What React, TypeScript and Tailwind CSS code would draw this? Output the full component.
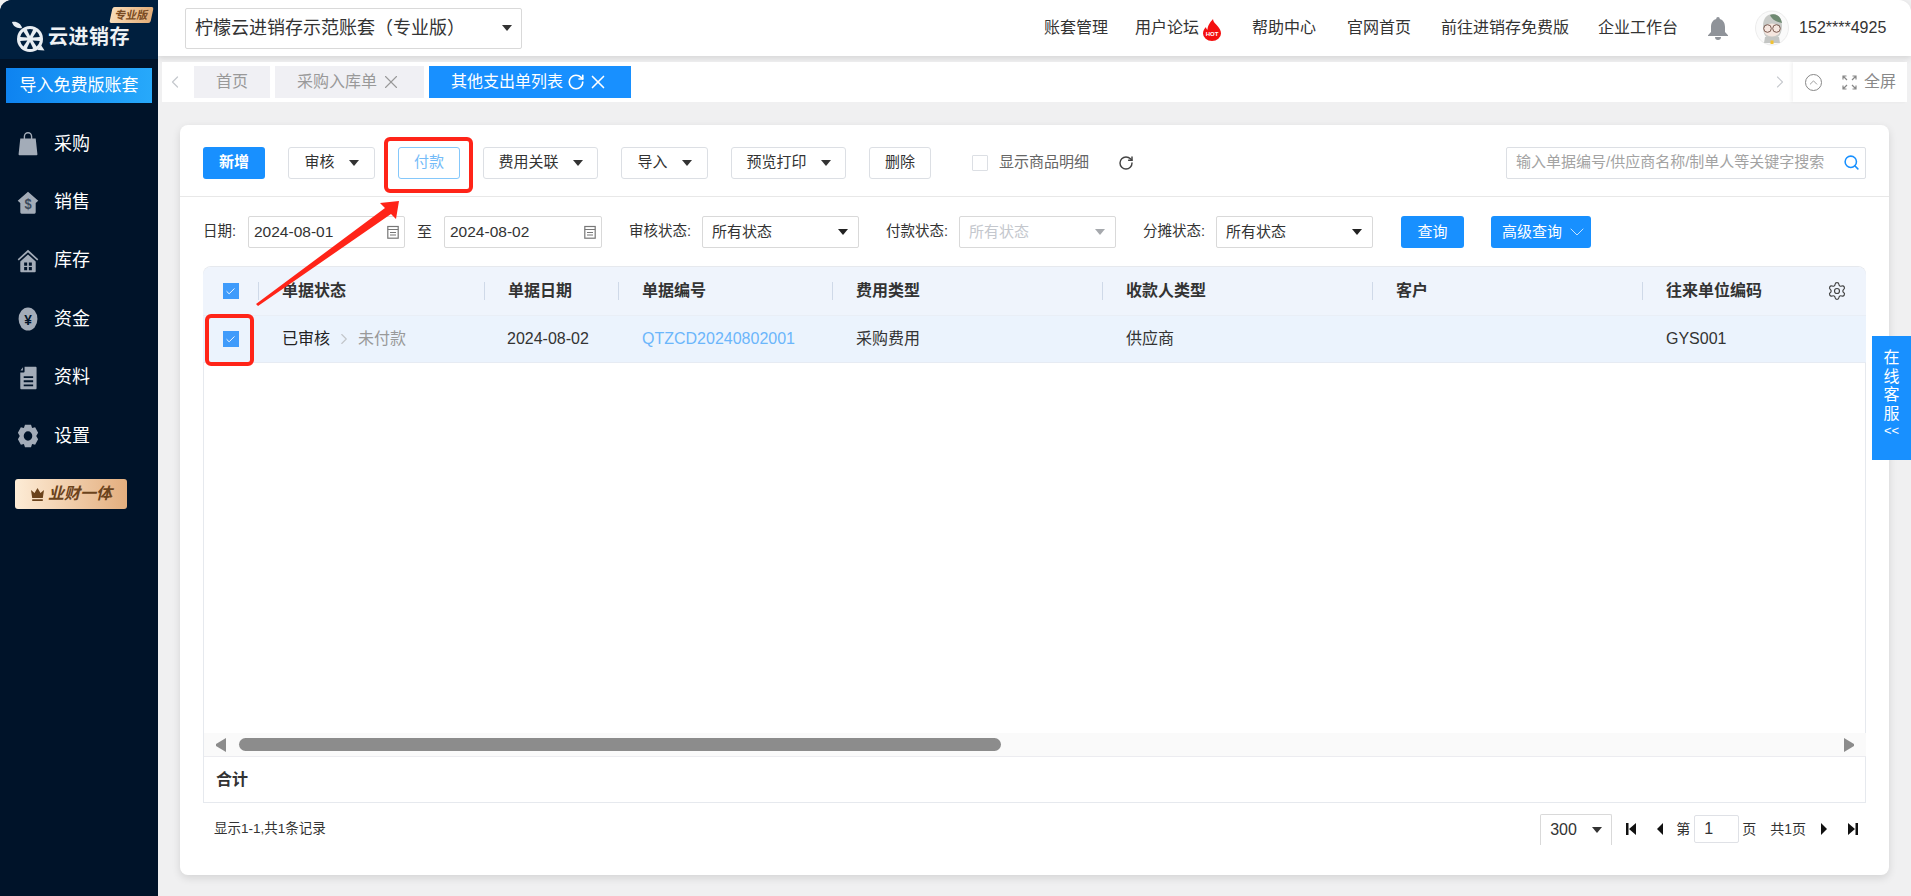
import React from "react";
import { ChevronLeft, ChevronRight, ChevronDown, ChevronUp, RotateCw, X, Search, Settings, Check } from "lucide-react";

const Caret = ({ color = "#333" }: { color?: string }) => (
  <svg width="10" height="6" viewBox="0 0 10 6" className="shrink-0"><path d="M0 0h10L5 6z" fill={color} /></svg>
);

const icons: Record<string, React.ReactNode> = {
  bag: <path d="M9 8V6a5 5 0 0 1 10 0v2h-1.600V6a3.400 3.400 0 0 0-6.800 0v2zM5 8h18l2 17a1 1 0 0 1-1 1H4a1 1 0 0 1-1-1z" />,
  sale: (
    <>
      <path d="M14 2l12 9.500-3 2.500v10a1.500 1.500 0 0 1-1.500 1.500h-15A1.500 1.500 0 0 1 5 24V14l-3-2.500z" />
      <text x="14" y="21" textAnchor="middle" fontSize="15" fontWeight="700" fill="#3c4a5c">$</text>
    </>
  ),
  home: <path fillRule="evenodd" d="M14 2L26 12l-1.200 1.500L14 4.600 3.200 13.500 2 12zM5 14.500l9-7.400 9 7.400V25a1 1 0 0 1-1 1H6a1 1 0 0 1-1-1zM9.500 15.500v3.500h3.500v-3.500zm5.500 0v3.500h3.500v-3.500zm-5.500 5v3.500h3.500v-3.500zm5.500 0v3.500h3.500v-3.500z" />,
  coin: (
    <>
      <ellipse cx="14" cy="14" rx="11" ry="12.500" />
      <text x="14" y="20" textAnchor="middle" fontSize="16" fontWeight="700" fill="#001329">¥</text>
    </>
  ),
  doc: <path fillRule="evenodd" d="M10 2h13a1 1 0 0 1 1 1v22a1 1 0 0 1-1 1H6a1 1 0 0 1-1-1V8h4a1 1 0 0 0 1-1zM8 2.500V6H5.300zM9 12v2h11v-2zm0 4.500v2h11v-2zm0 4.500v2h11v-2z" />,
  gear: <path fillRule="evenodd" d="M10.500 2h7l1.300 3.300 3.500-.600 3.500 5.800-2.200 3.500 2.200 3.500-3.500 5.800-3.500-.600L17.500 26h-7l-1.300-3.300-3.500.600-3.500-5.800 2.200-3.500-2.200-3.500 3.500-5.800 3.500.600zM14 9a5 5 0 1 0 0 10 5 5 0 0 0 0-10z" />,
};

const NavItem = ({ icon, label }: { icon: string; label: string }) => (
  <div className="flex h-[58.4px] items-center pl-[16px] text-[18px] text-white">
    <svg width="24" height="26" viewBox="0 0 28 28" fill="#a3acb8" className="shrink-0" preserveAspectRatio="none">{icons[icon]}</svg>
    <span className="ml-[14px]">{label}</span>
  </div>
);

const Lemon = () => (
  <svg width="37" height="32" viewBox="0 0 37 32" className="shrink-0">
    <path d="M1 1c4.500-1 9 1.500 10 6-4.500 1-9-1.500-10-6z" fill="#e8edf2" />
    <circle cx="19" cy="18" r="13" fill="#e8edf2" />
    <path d="M30 24l3.500 5.500-7-.500z" fill="#e8edf2" />
    <g fill="#001f3e">
      {[0, 60, 120, 180, 240, 300].map((a) => (
        <path key={a} transform={`rotate(${a} 19 18)`} d="M19 15L15.800 8.500A10 10 0 0 1 22.200 8.500z" />
      ))}
    </g>
  </svg>
);

const Sidebar = () => (
  <aside className="flex h-full w-[158px] shrink-0 flex-col overflow-hidden rounded-tl-xl bg-[#001329]">
    <div className="relative flex h-[59px] items-center bg-[#001f3e] pl-[11px] pt-[14px]">
      <Lemon />
      <span className="text-[20px] leading-none font-bold tracking-[0.5px] text-[#eef1f4]">云进销存</span>
      <span className="absolute top-[7px] left-[111px] flex h-[16px] w-[41px] -skew-x-12 items-center justify-center rounded-[2px] bg-gradient-to-r from-[#f8dcb8] to-[#e3ad78] text-[11px] font-bold text-[#7a4b22]">专业版</span>
    </div>
    <div className="mx-[6px] mt-[9px] flex h-[35px] items-center justify-center bg-gradient-to-r from-[#0e83f0] to-[#27a9fb] text-[17px] text-white">导入免费版账套</div>
    <nav className="mt-[12px]">
      <NavItem icon="bag" label="采购" />
      <NavItem icon="sale" label="销售" />
      <NavItem icon="home" label="库存" />
      <NavItem icon="coin" label="资金" />
      <NavItem icon="doc" label="资料" />
      <NavItem icon="gear" label="设置" />
    </nav>
    <div className="ml-[15px] mt-[14px] flex h-[30px] w-[112px] items-center justify-center gap-[3px] rounded-[3px] bg-gradient-to-r from-[#fdecd6] to-[#e3ae7e] text-[16px] font-bold text-[#6b431c] italic">
      <svg width="15" height="15" viewBox="0 0 15 15" fill="#6b431c"><path d="M1 3l3.500 3L7.500 1l3 5L14 3l-1.200 8H2.200zM2.200 12.300h10.600V14H2.200z" /></svg>
      <span>业财一体</span>
    </div>
  </aside>
);

const Flame = () => (
  <svg width="18" height="22" viewBox="0 0 18 22" className="mt-[3px] ml-[4px]">
    <path d="M10 0c0 3 2.500 4.500 4.500 7 2 2.500 3.500 4.500 3.500 7.500a9 7.500 0 0 1-18 0c0-3 1.500-5 3-6.500 0 1.200.5 2.200 1.500 2.700C4.500 6.500 7.500 3 10 0z" fill="#f40f0f" />
    <text x="9" y="16.500" textAnchor="middle" fontSize="6" fontWeight="700" fill="#fff">HOT</text>
  </svg>
);

const TopBar = () => (
  <header className="flex h-[56px] shrink-0 items-center rounded-tr-xl bg-white pl-[27px] text-[16px] text-[#333] shadow-[0_2px_6px_rgba(0,0,0,0.12)]">
    <div className="flex h-[41px] w-[337px] items-center justify-between rounded-[2px] border border-[#d9d9d9] pr-[9px] pl-[9px] text-[18px]">
      <span>柠檬云进销存示范账套（专业版）</span>
      <Caret />
    </div>
    <div className="ml-[522px] flex items-center">账套管理</div>
    <div className="ml-[27px] flex items-center">用户论坛<Flame /></div>
    <div className="ml-[31px]">帮助中心</div>
    <div className="ml-[31px]">官网首页</div>
    <div className="ml-[30px]">前往进销存免费版</div>
    <div className="ml-[29px]">企业工作台</div>
    <svg width="20" height="23" viewBox="0 0 20 23" fill="#8f9399" className="ml-[30px]">
      <path d="M10 0a1.800 1.800 0 0 1 1.800 1.900C15.300 2.800 17 6 17 10v5l3 3.200V19H0v-.8L3 15v-5c0-4 1.700-7.200 5.200-8.100A1.800 1.800 0 0 1 10 0zM7 20h6a3 3 0 0 1-6 0z" />
    </svg>
    <svg width="34" height="36" viewBox="0 0 34 36" className="ml-[27px]">
      <ellipse cx="17" cy="18" rx="16.500" ry="17" fill="#fafafa" stroke="#ececec" />
      <path d="M8 16C8 8 12 4 18 4c5 0 9 4 9 12 0 7-3 13-10 13S8 23 8 16z" fill="#c9cbc8" />
      <path d="M15 5c5-2.500 11 1 12 8-5-1-10-3-12-8z" fill="#6f8a72" />
      <ellipse cx="17" cy="20" rx="8.500" ry="6.500" fill="#f5e6df" />
      <circle cx="12.500" cy="18.500" r="3.800" fill="none" stroke="#7a5a50" />
      <circle cx="21.500" cy="18.500" r="3.800" fill="none" stroke="#7a5a50" />
      <path d="M10 27h14l1 6H9z" fill="#c4c6c4" />
      <path d="M15.500 30.500h3v3.500h-3z" fill="#f2c230" />
    </svg>
    <span className="ml-[10px]">152****4925</span>
  </header>
);

const TabBar = () => (
  <div className="mt-[6px] mr-[4px] ml-[4px] flex h-[40px] shrink-0 items-center bg-white text-[16px]">
    <ChevronLeft className="ml-[3px] text-[#c6c9ce]" size={20} strokeWidth={1.500} />
    <div className="ml-[9px] flex h-[32px] w-[76px] items-center justify-center bg-[#f0f0f4] text-[#999]">首页</div>
    <div className="ml-[5px] flex h-[32px] w-[149px] items-center justify-center gap-[3px] bg-[#f0f0f4] text-[#999]">采购入库单<X size={22} strokeWidth={1.200} /></div>
    <div className="ml-[5px] flex h-[32px] w-[202px] items-center gap-[4px] bg-[#1890ff] pl-[22px] text-white">其他支出单列表<RotateCw size={18} strokeWidth={2.200} /><X size={22} strokeWidth={1.800} className="ml-[-2px]" /></div>
    <ChevronRight className="ml-auto text-[#c6c9ce]" size={20} strokeWidth={1.300} />
    <div className="ml-[3px] flex h-full w-[114px] items-center pl-[12px] text-[#888] shadow-[-2px_0_3px_rgba(0,0,0,0.05)]">
      <span className="flex h-[17px] w-[17px] shrink-0 items-center justify-center rounded-full border border-[#888]"><ChevronUp size={13} strokeWidth={1.500} /></span>
      <svg width="15" height="15" viewBox="0 0 15 15" fill="none" stroke="#888" strokeWidth="1.200" className="ml-[20px] shrink-0">
        <path d="M1 4.500V1h3.500M1 1l4 4M14 4.500V1h-3.500M14 1l-4 4M1 10.500V14h3.500M1 14l4-4M14 10.500V14h-3.500M14 14l-4-4" />
      </svg>
      <span className="ml-[7px]">全屏</span>
    </div>
  </div>
);

const Btn = ({ w, label, caret, light }: { w: string; label: string; caret?: boolean; light?: boolean }) => (
  <div className={`${w} flex h-[32px] shrink-0 items-center justify-center gap-[14px] rounded-[3px] border text-[15px] ${light ? "border-[#85c8fb] text-[#74bbf8]" : "border-[#dcdfe4] text-[#333]"}`}>
    <span>{label}</span>
    {caret && <Caret />}
  </div>
);

const Toolbar = () => (
  <div className="flex h-[72px] shrink-0 items-center gap-[23px] border-b border-[#e8e8e8] px-[23px] pt-[4px]">
    <div className="flex h-[32px] w-[62px] items-center justify-center rounded-[3px] bg-[#1890ff] text-[15px] font-semibold text-white">新增</div>
    <Btn w="w-[87px]" label="审核" caret />
    <Btn w="w-[62px]" label="付款" light />
    <Btn w="w-[115px]" label="费用关联" caret />
    <Btn w="w-[87px]" label="导入" caret />
    <Btn w="w-[115px]" label="预览打印" caret />
    <Btn w="w-[62px]" label="删除" />
    <span className="ml-[18px] h-[16px] w-[16px] rounded-[1px] border border-[#dcdfe4]" />
    <span className="-ml-[12px] text-[15px] text-[#666]">显示商品明细</span>
    <RotateCw className="ml-[6px] text-[#444]" size={16} strokeWidth={2.200} />
    <div className="ml-auto flex h-[32px] w-[360px] items-center justify-between rounded-[2px] border border-[#dcdfe4] pr-[5px] pl-[9px] text-[15px] text-[#a3a3a3]">
      <span>输入单据编号/供应商名称/制单人等关键字搜索</span>
      <Search size={17} color="#1890ff" strokeWidth={2.200} />
    </div>
  </div>
);

const Cal = () => (
  <svg width="12" height="14" viewBox="0 0 12 14" fill="none" stroke="#777" strokeWidth="1.200" className="shrink-0">
    <rect x="0.800" y="1.500" width="10.400" height="11.700" /><path d="M0.800 4.500h10.400M3 7.500h6M3 10h6" />
  </svg>
);

const DateBox = ({ w, v }: { w: string; v: string }) => (
  <div className={`${w} flex h-[32px] shrink-0 items-center justify-between rounded-[2px] border border-[#d9d9d9] pr-[5px] pl-[5px] text-[15.500px] text-[#333]`}>
    <span>{v}</span><Cal />
  </div>
);

const SelBox = ({ disabled }: { disabled?: boolean }) => (
  <div className={`flex h-[32px] w-[157px] shrink-0 items-center justify-between rounded-[2px] border border-[#d9d9d9] pr-[10px] pl-[9px] text-[15px] ${disabled ? "text-[#c4c7cd]" : "text-[#333]"}`}>
    <span>所有状态</span><Caret color={disabled ? "#a6a9ad" : "#222"} />
  </div>
);

const Lbl = ({ w, t, cls = "" }: { w: string; t: string; cls?: string }) => (
  <span className={`${w} ${cls} shrink-0 text-[14.500px] text-[#333]`}>{t}</span>
);

const FilterRow = () => (
  <div className="mt-[19px] flex h-[32px] shrink-0 items-center px-[23px]">
    <Lbl w="w-[45px]" t="日期:" />
    <DateBox w="w-[157px]" v="2024-08-01" />
    <span className="w-[39px] shrink-0 text-center text-[15px] text-[#333]">至</span>
    <DateBox w="w-[158px]" v="2024-08-02" />
    <Lbl w="w-[73px]" cls="ml-[27px]" t="审核状态:" />
    <SelBox />
    <Lbl w="w-[73px]" cls="ml-[27px]" t="付款状态:" />
    <SelBox disabled />
    <Lbl w="w-[73px]" cls="ml-[27px]" t="分摊状态:" />
    <SelBox />
    <div className="ml-[28px] flex h-[32px] w-[63px] items-center justify-center rounded-[3px] bg-[#1890ff] text-[15px] text-white">查询</div>
    <div className="ml-[27px] flex h-[32px] w-[100px] items-center gap-[3px] rounded-[3px] bg-[#1890ff] pl-[11px] text-[15px] text-white">高级查询<ChevronDown size={24} strokeWidth={1} color="#c5e3ff" /></div>
  </div>
);

const cols = "grid grid-cols-[55px_226px_134px_214px_270px_270px_270px_1fr]";

const CheckBox = () => (
  <span className="flex h-[16px] w-[16px] items-center justify-center bg-[#3f9bfb]"><Check size={11} color="#fff" strokeWidth={2} /></span>
);

const HeadCell = ({ t }: { t: string }) => (
  <div className="flex items-center">
    <span className="mr-[23px] h-[18px] w-px bg-[#cfd9e8]" />
    <span>{t}</span>
  </div>
);

const Table = () => (
  <div className="mx-[23px] mt-[18px] flex min-h-0 flex-1 flex-col rounded-t-lg border-x border-t border-[#e6e9ee] text-[16px]">
    <div className={`${cols} relative -mx-px h-[49px] shrink-0 items-center rounded-t-lg border-b border-[#e9eef6] bg-[#eff4fc] font-semibold text-[#333]`}>
      <div className="flex justify-center"><CheckBox /></div>
      <HeadCell t="单据状态" /><HeadCell t="单据日期" /><HeadCell t="单据编号" /><HeadCell t="费用类型" /><HeadCell t="收款人类型" /><HeadCell t="客户" /><HeadCell t="往来单位编码" />
      <Settings className="absolute top-[14px] right-[19px] text-[#444]" size={20} strokeWidth={1.400} />
    </div>
    <div className={`${cols} -mx-px h-[47px] shrink-0 items-center border-b border-[#e6ebf3] bg-[#ebf3fd] text-[#333]`}>
      <div className="flex justify-center"><CheckBox /></div>
      <div className="flex items-center pl-[24px]"><span className="text-[#222]">已审核</span><ChevronRight className="mx-[5px] text-[#c2c5ca]" size={18} strokeWidth={1.500} /><span className="text-[#999]">未付款</span></div>
      <div className="pl-[23px]">2024-08-02</div>
      <div className="pl-[24px] text-[#6bb6fb]">QTZCD20240802001</div>
      <div className="pl-[24px]">采购费用</div>
      <div className="pl-[24px]">供应商</div>
      <div />
      <div className="pl-[24px]">GYS001</div>
    </div>
    <div className="min-h-0 flex-1" />
    <div className="-mr-px flex h-[24px] shrink-0 items-center border-b border-[#ececf0] bg-[#fafafa] pr-[11px] pl-[11px]">
      <svg width="12" height="14" viewBox="0 0 12 14" fill="#8c8c8c"><path d="M11 0v14L1 8V6z" /></svg>
      <div className="ml-[12px] h-[13px] w-[762px] rounded-full bg-[#8c8c8c]" />
      <svg width="12" height="14" viewBox="0 0 12 14" fill="#8c8c8c" className="ml-auto"><path d="M1 0v14l10-6V6z" /></svg>
    </div>
    <div className="flex h-[46px] shrink-0 items-center border-b border-[#e6e9ee] pl-[12px] font-semibold text-[#333]">合计</div>
  </div>
);

const PgIcon = ({ d, cls }: { d: string; cls: string }) => (
  <svg width="10" height="12" viewBox="0 0 10 12" fill="#111" className={cls}><path d={d} /></svg>
);

const Pager = () => (
  <div className="flex h-[72px] shrink-0 items-start pt-[11px] pr-[31px] pl-[23px] text-[#333]">
    <span className="mt-[5px] ml-[11px] text-[13.500px]">显示1-1,共1条记录</span>
    <div className="ml-auto flex h-[31px] w-[72px] items-center justify-between rounded-t-[2px] border-x border-t border-[#d9d9d9] pr-[9px] pl-[9px] text-[16px]">
      <span>300</span><Caret />
    </div>
    <div className="flex h-[30px] items-center text-[14px]">
      <PgIcon cls="ml-[14px]" d="M0 0h2.500v12H0zM10 0v12L3 6z" />
      <PgIcon cls="ml-[19px]" d="M8 0v12L2 6z" />
      <span className="ml-[11px]">第</span>
      <span className="ml-[4px] flex h-[28px] w-[45px] items-center rounded-[2px] border border-[#dfe1e6] pl-[9px] text-[16px]">1</span>
      <span className="ml-[3px]">页</span>
      <span className="ml-[14px]">共1页</span>
      <PgIcon cls="ml-[13px]" d="M2 0v12l6-6z" />
      <PgIcon cls="ml-[19px]" d="M7.500 0H10v12H7.500zM0 0v12l7-6z" />
    </div>
  </div>
);

const Overlays = () => (
  <>
    <div className="absolute top-[137px] left-[384px] h-[56px] w-[89px] rounded-[6px] border-[4px] border-[#ff2418]" />
    <div className="absolute top-[314px] left-[205px] h-[52px] w-[49px] rounded-[6px] border-[4px] border-[#ff2418]" />
    <svg className="absolute top-[190px] left-[250px]" width="160" height="125" viewBox="250 190 160 125">
      <polygon points="256,304 385,208 380,203 399,201 396,219 391,214 258,306" fill="#ff2418" />
    </svg>
    <div className="absolute top-[336px] right-0 flex h-[124px] w-[39px] flex-col items-center bg-[#1890ff] pt-[13px] text-[16px] leading-[18.500px] text-white">
      <span>在</span><span>线</span><span>客</span><span>服</span><span className="text-[13px] leading-[16px]">&lt;&lt;</span>
    </div>
  </>
);

export default function App() {
  return (
    <div className="relative flex h-[896px] w-[1911px] overflow-hidden bg-[#f0f0f1] [font-family:'Liberation_Sans','Noto_Sans_CJK_SC',sans-serif]">
      <Sidebar />
      <main className="flex min-w-0 flex-1 flex-col">
        <TopBar />
        <TabBar />
        <section className="mt-[23px] mr-[22px] mb-[21px] ml-[22px] flex min-h-0 flex-1 flex-col rounded-lg bg-white shadow-[0_3px_8px_rgba(0,0,0,0.12)]">
          <Toolbar />
          <FilterRow />
          <Table />
          <Pager />
        </section>
      </main>
      <Overlays />
    </div>
  );
}
